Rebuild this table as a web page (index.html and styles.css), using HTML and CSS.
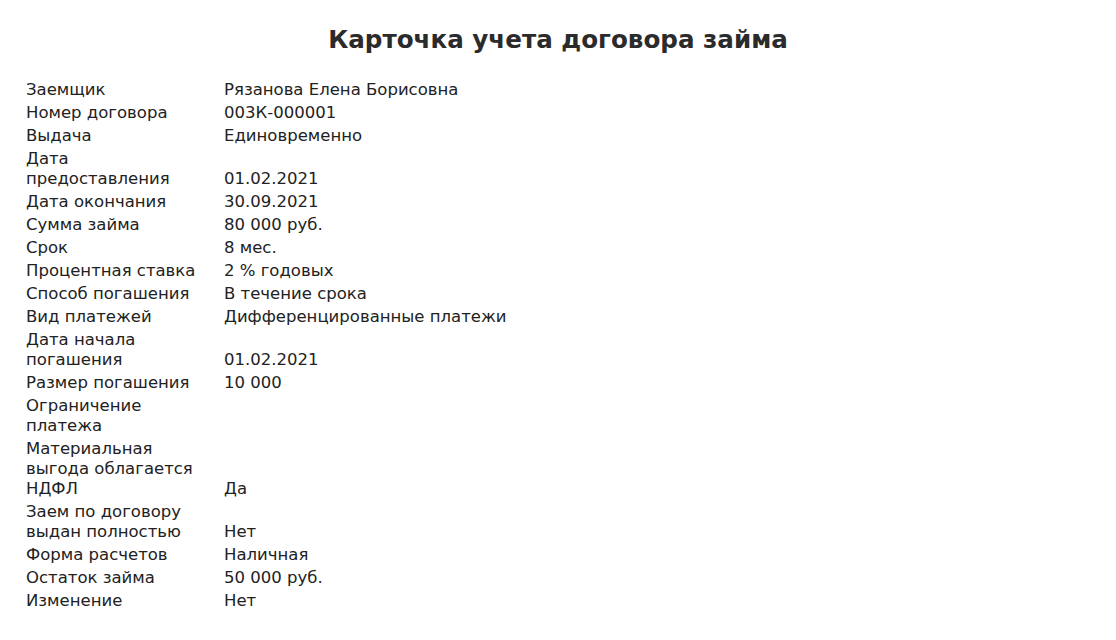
FILE: index.html
```html
<!DOCTYPE html>
<html lang="ru">
<head>
<meta charset="utf-8">
<link rel="stylesheet" href="styles.css">
</head>
<body>
<div class="card">
  <h1 class="title">Карточка учета договора займа</h1>
  <table class="info">
    <tr><td class="label">Заемщик</td><td class="value">Рязанова Елена Борисовна</td></tr>
    <tr><td class="label">Номер договора</td><td class="value">003К-000001</td></tr>
    <tr><td class="label">Выдача</td><td class="value">Единовременно</td></tr>
    <tr><td class="label">Дата предоставления</td><td class="value">01.02.2021</td></tr>
    <tr><td class="label">Дата окончания</td><td class="value">30.09.2021</td></tr>
    <tr><td class="label">Сумма займа</td><td class="value">80 000 руб.</td></tr>
    <tr><td class="label">Срок</td><td class="value">8 мес.</td></tr>
    <tr><td class="label">Процентная ставка</td><td class="value">2 % годовых</td></tr>
    <tr><td class="label">Способ погашения</td><td class="value">В течение срока</td></tr>
    <tr><td class="label">Вид платежей</td><td class="value">Дифференцированные платежи</td></tr>
    <tr><td class="label">Дата начала погашения</td><td class="value">01.02.2021</td></tr>
    <tr><td class="label">Размер погашения</td><td class="value">10 000</td></tr>
    <tr><td class="label">Ограничение платежа</td><td class="value"></td></tr>
    <tr><td class="label">Материальная выгода облагается НДФЛ</td><td class="value">Да</td></tr>
    <tr><td class="label">Заем по договору выдан полностью</td><td class="value">Нет</td></tr>
    <tr><td class="label">Форма расчетов</td><td class="value">Наличная</td></tr>
    <tr><td class="label">Остаток займа</td><td class="value">50 000 руб.</td></tr>
    <tr><td class="label">Изменение</td><td class="value">Нет</td></tr>
  </table>
</div>
</body>
</html>
```
FILE: styles.css
```css
html, body {
  margin: 0;
  padding: 0;
  background: #ffffff;
}
body {
  font-family: "DejaVu Sans", Verdana, sans-serif;
  color: #222222;
}
.card {
  padding: 24px 26px 0 26px;
}
.title {
  margin: 0 0 22px 0;
  text-align: center;
  font-size: 24.6px;
  line-height: 32px;
  font-weight: bold;
  color: #2b2b2b;
}
.info {
  border-collapse: collapse;
  font-size: 16.5px;
  line-height: 20px;
}
.info td {
  padding: 2px 0 1px 0;
  vertical-align: bottom;
  text-align: left;
}
.info td.label {
  width: 180px;
  padding-right: 18px;
}
```
